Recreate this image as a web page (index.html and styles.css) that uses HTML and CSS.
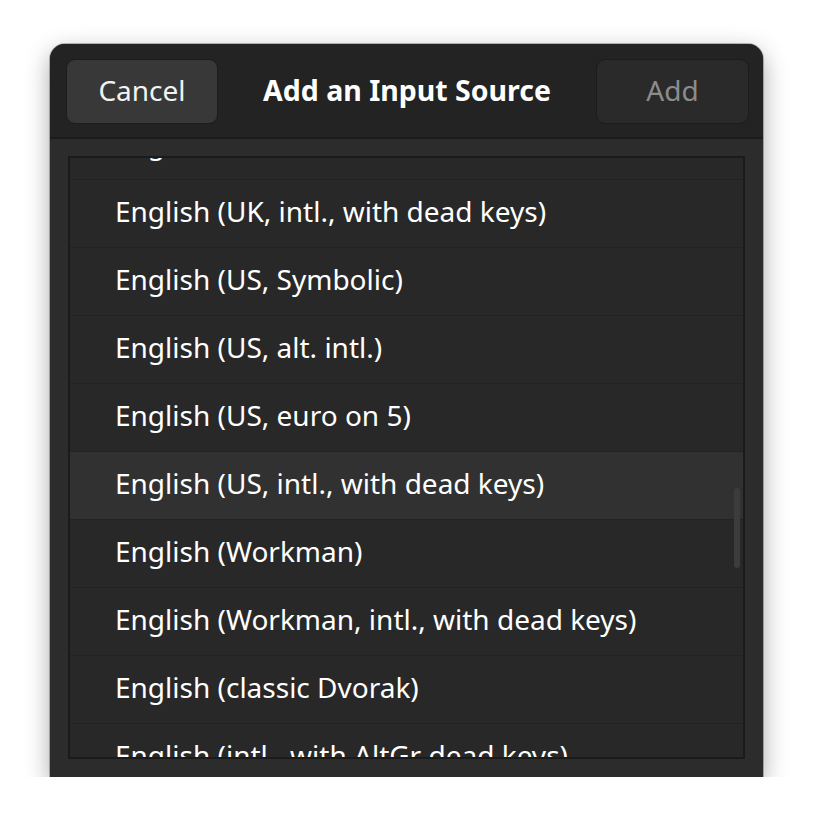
FILE: index.html
```html
<!DOCTYPE html>
<html>
<head>
<meta charset="utf-8">
<link rel="stylesheet" href="styles.css">
</head>
<body>
<div class="dialog">
  <header class="header">
    <button class="btn btn-cancel">Cancel</button>
    <div class="title">Add an Input Source</div>
    <button class="btn btn-add" disabled>Add</button>
  </header>
  <div class="body">
    <div class="frame">
      <div class="viewport">
        <ul class="list">
          <li class="row">English (UK, extended, Windows)</li>
          <li class="row">English (UK, intl., with dead keys)</li>
          <li class="row">English (US, Symbolic)</li>
          <li class="row">English (US, alt. intl.)</li>
          <li class="row">English (US, euro on 5)</li>
          <li class="row hover">English (US, intl., with dead keys)</li>
          <li class="row">English (Workman)</li>
          <li class="row">English (Workman, intl., with dead keys)</li>
          <li class="row">English (classic Dvorak)</li>
          <li class="row">English (intl., with AltGr dead keys)</li>
        </ul>
        <div class="scrollbar"></div>
      </div>
    </div>
  </div>
</div>
</body>
</html>
```
FILE: styles.css
```css
html, body {
  margin: 0;
  padding: 0;
  background: #ffffff;
}
body {
  padding: 44px 0 0 50px;
  font-family: "Noto Sans", "Open Sans", sans-serif;
}
.dialog {
  width: 713px;
  height: 733px;
  background: #2c2c2c;
  border-radius: 15px 15px 0 0;
  box-shadow: 0 8px 24px rgba(0,0,0,0.35), 0 0 0 1px rgba(0,0,0,0.25);
  display: flex;
  flex-direction: column;
  overflow: hidden;
}
.header {
  height: 95px;
  box-sizing: border-box;
  padding: 15px 14px 13px 16px;
  background: #232323;
  border-bottom: 2px solid #1b1b1b;
  display: flex;
  align-items: center;
  justify-content: space-between;
  flex: none;
}
.btn {
  height: 65px;
  box-sizing: border-box;
  border-radius: 9px;
  border: 1px solid #1c1c1c;
  font-family: inherit;
  font-size: 28px;
  padding: 0 0 4px 0;
}
.btn-cancel {
  width: 152px;
  background: #383838;
  color: #f2f2f2;
}
.btn-add {
  width: 153px;
  background: #2a2a2a;
  color: #8c8c8c;
}
.title {
  color: #ffffff;
  font-weight: 700;
  font-size: 28.5px;
  padding-bottom: 4px;
}
.body {
  flex: 1;
  padding: 17px 18px 18px 18px;
  display: flex;
  min-height: 0;
}
.frame {
  flex: 1;
  border: 2px solid #1b1b1b;
  background: #282828;
  overflow: hidden;
  display: flex;
}
.viewport {
  flex: 1;
  position: relative;
  overflow: hidden;
}
.list {
  list-style: none;
  margin: -46px 0 0 0;
  padding: 0;
}
.row {
  height: 67px;
  border-bottom: 1px solid #222222;
  padding: 0 0 0 45px;
  color: #ffffff;
  font-size: 28px;
  line-height: 63px;
  white-space: nowrap;
}
.row.hover {
  background: #313131;
}
.scrollbar {
  position: absolute;
  right: 3px;
  top: 330px;
  width: 6px;
  height: 80px;
  border-radius: 3px;
  background: #3c3c3c;
}
```
